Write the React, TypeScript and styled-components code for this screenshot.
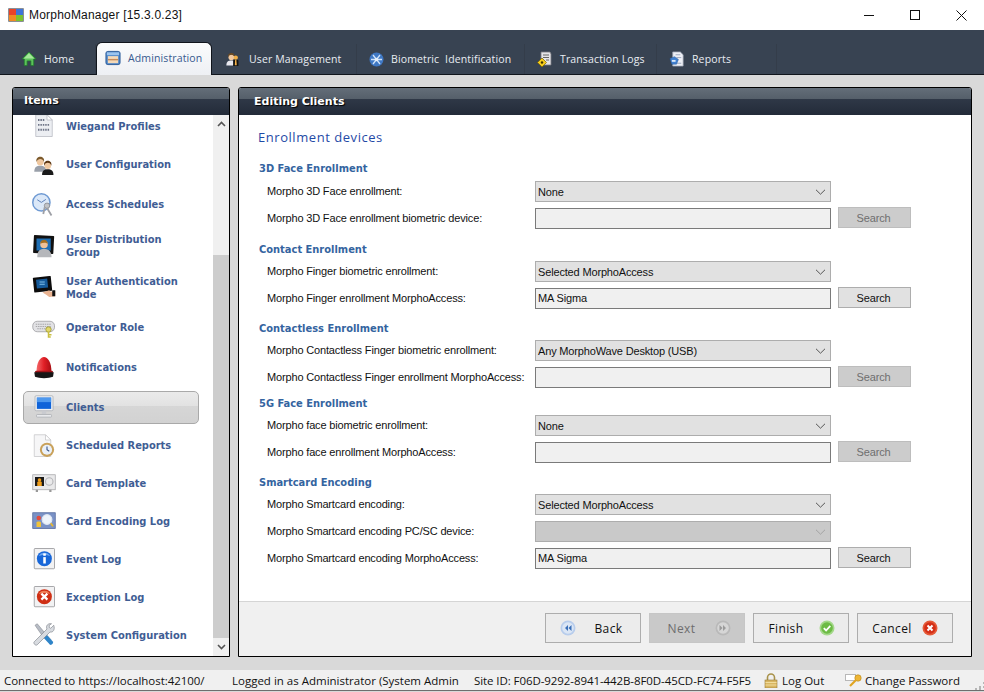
import React from "react";
import styled, { createGlobalStyle } from "styled-components";

const Global = createGlobalStyle`
  html, body { margin: 0; padding: 0; background: #d9d9d9; }
  * { box-sizing: border-box; }
`;
const UI = `"Open Sans", "Noto Sans", Tahoma, sans-serif`;
const FIELD = `"Liberation Sans", Arial, sans-serif`;
const BOLD = `"DejaVu Sans", Verdana, sans-serif`;

const Page = styled.div`
  width: 984px; height: 692px; overflow: hidden; display: flex; flex-direction: column;
  background: #d9d9d9; font-family: ${UI}; color: #111;
`;
const TitleBar = styled.div`
  height: 30px; background: #fff; display: flex; align-items: center; padding-left: 8px;
`;
const TitleText = styled.span`
  margin-left: 5px; font: 12px ${FIELD}; letter-spacing: 0.2px; color: #111; flex: 1;
`;
const WinBtn = styled.div`
  width: 46px; height: 30px; display: flex; align-items: center; justify-content: center;
`;
const Nav = styled.div`
  height: 45px; background: #384352; border-bottom: 1px solid #10151c; display: flex; align-items: flex-end; padding-left: 9px;
`;
const Tab = styled.div<{ $w: number; $active?: boolean; $ws?: number }>`
  width: ${p => p.$w}px; height: ${p => (p.$active ? 33 : 30)}px; display: flex; align-items: center; gap: 7px;
  padding-left: ${p => (p.$active ? 8 : 12)}px;
  margin-right: ${p => (p.$active ? 2 : 0)}px;
  padding-bottom: ${p => (p.$active ? 3 : 0)}px;
  margin-bottom: ${p => (p.$active ? -1 : 0)}px;
  font-size: 10.5px; letter-spacing: 0.13px; word-spacing: ${p => p.$ws ?? 0}px;
  color: ${p => (p.$active ? "#37598f" : "#e9edf2")};
  background: ${p => (p.$active ? "linear-gradient(#fafbfc, #eef0f4)" : "transparent")};
  border: ${p => (p.$active ? "1px solid #10151c" : "none")};
  border-bottom: none; border-radius: ${p => (p.$active ? "6px 6px 0 0" : "0")};
  border-right: ${p => (p.$active ? "1px solid #10151c" : "1px solid #343d4a")};
  white-space: nowrap;
`;
const Main = styled.div`
  flex: 1; display: flex; gap: 8px; padding: 12px 12px 13px;
  min-height: 0;
`;
const Panel = styled.div<{ $w?: number }>`
  width: ${p => (p.$w ? p.$w + "px" : "auto")}; flex: ${p => (p.$w ? "none" : 1)};
  border: 1px solid #000; border-radius: 3px 3px 0 0; background: #fff; display: flex; flex-direction: column; overflow: hidden;
`;
const PanelHead = styled.div<{ $pad: number; $pb: number }>`
  height: 27px; flex: none; padding-left: ${p => p.$pad}px; display: flex; align-items: center;
  background: linear-gradient(#646e79 0, #555f6a 40%, #2f3847 41%, #232b39 100%);
  color: #fff; font: bold 11px ${BOLD}; text-shadow: 1px 1px 1px #000; padding-bottom: ${p => p.$pb}px;
`;
const SideBody = styled.div`
  flex: 1; display: flex; min-height: 0;
`;
const List = styled.div`
  flex: 1; overflow: hidden; background: #fff;
`;
const ListInner = styled.div`
  margin-top: -8px;
`;
const Item = styled.div<{ $h: number }>`
  height: ${p => p.$h}px; display: flex; align-items: center; padding: 0 14px 0 10px;
`;
const ItemBox = styled.div<{ $active?: boolean }>`
  flex: 1; height: 33px; display: flex; align-items: center; gap: 10px; padding-left: 8px;
  border: 1px solid ${p => (p.$active ? "#a9a9a9" : "transparent")}; border-radius: 5px;
  background: ${p => (p.$active ? "linear-gradient(#eaeaea 0, #e2e2e2 45%, #d6d6d6 46%, #d2d2d2 100%)" : "transparent")};
`;
const ItemIcon = styled.div`
  width: 24px; height: 24px; flex: none; display: flex;
`;
const ItemText = styled.span`
  font: bold 11px/13px ${BOLD}; font-stretch: condensed; color: #3f5d94; max-width: 126px;
`;
const Scroll = styled.div`
  width: 16px; flex: none; background: #f0f0f0; display: flex; flex-direction: column;
`;
const ScrollArrow = styled.div`
  height: 18px; flex: none; display: flex; align-items: center; justify-content: center;
`;
const ScrollGap = styled.div`
  flex: 1;
`;
const Thumb = styled.div`
  height: 383px; flex: none; background: #cdcdcd;
`;
const Form = styled.div`
  flex: 1; padding-left: 19px; min-height: 0; background: #fff;
`;
const PageTitle = styled.div`
  margin-top: 13px; height: 18px; line-height: 18px; font-size: 13px; letter-spacing: 0.55px; color: #1f4aa6;
`;
const Section = styled.div<{ $top: number }>`
  margin-top: ${p => p.$top}px; display: flex; flex-direction: column; gap: 6px;
`;
const Heading = styled.div<{ $lh: number }>`
  height: 14px; margin-left: 1px; font: bold 11px/${p => p.$lh}px ${BOLD}; font-stretch: condensed; color: #34649f;
`;
const Row = styled.div`
  display: grid; grid-template-columns: 261px 296px 73px; column-gap: 7px; margin-left: 9px; height: 21px; align-items: center;
  font: 11px ${FIELD}; letter-spacing: -0.16px; color: #111;
`;
const Label = styled.span`
  white-space: nowrap; margin-top: -2px;
`;
const Select = styled.div<{ $disabled?: boolean }>`
  height: 21px; border: 1px solid #adadad; background: ${p => (p.$disabled ? "#c9c9c9" : "#e1e1e1")};
  display: flex; align-items: center; justify-content: space-between; padding: 0 4px 0 2px;
`;
const Input = styled.div`
  height: 21px; border: 1px solid #7a7a7a; background: #f0f0f0; display: flex; align-items: center; padding: 0 0 2px 2px;
`;
const SearchBtn = styled.div<{ $disabled?: boolean }>`
  height: 21px; margin-top: -2px; border: 1px solid ${p => (p.$disabled ? "#bdbdbd" : "#adadad")};
  background: ${p => (p.$disabled ? "#cccccc" : "#e1e1e1")}; color: ${p => (p.$disabled ? "#6f6f6f" : "#111")};
  display: flex; align-items: center; justify-content: center; padding-right: 2px;
`;
const Footer = styled.div`
  height: 55px; flex: none; background: #f0f0f0; border-top: 1px solid #d5d5d5; display: flex; justify-content: flex-end; gap: 8px;
  padding: 11px 18px 0 0;
`;
const WizBtn = styled.div<{ $disabled?: boolean; $gap?: number }>`
  width: 96px; height: 30px; border: 1px solid ${p => (p.$disabled ? "#c6c6c6" : "#adadad")};
  background: ${p => (p.$disabled ? "#c9c9c9" : "#ececec")}; color: ${p => (p.$disabled ? "#6d6d6d" : "#111")};
  display: flex; align-items: center; justify-content: center; gap: ${p => p.$gap ?? 15}px; font-size: 12px; letter-spacing: 0.4px;
`;
const WizLabel = styled.span<{ $w: number; $right?: boolean }>`
  width: ${p => p.$w}px; text-align: ${p => (p.$right ? "right" : "center")};
`;
const Status = styled.div`
  height: 21px; flex: none; background: #f0f0f0; border-bottom: 1px solid #6e6e6e; display: flex; align-items: center; font-size: 11.5px; color: #111; white-space: nowrap;
  margin-bottom: 1px;
`;
const StatusCell = styled.div<{ $w: number; $pl?: number; $ls?: number }>`
  width: ${p => p.$w}px; flex: none; overflow: hidden; padding-left: ${p => p.$pl ?? 0}px; display: flex; align-items: center; gap: 4px;
  letter-spacing: ${p => p.$ls ?? 0}px;
`;
const Grip = styled.div`
  flex: 1; display: flex; justify-content: flex-end; align-items: flex-end; height: 100%; padding-right: 1px;
`;

const S = ({ children, s = 24, vb = 32 }: { children: React.ReactNode; s?: number; vb?: number }) => (
  <svg width={s} height={s} viewBox={`0 0 ${vb} ${vb}`} style={{ display: "block", flex: "none" }}>{children}</svg>
);

const Person = ({ x, y, k = 1, body = "#555", hair = "#8a5a2a" }: { x: number; y: number; k?: number; body?: string; hair?: string }) => (
  <g transform={`translate(${x} ${y}) scale(${k})`}>
    <path d="M-8 16c0-6 3-8 8-8s8 2 8 8z" fill={body} />
    <circle cx="0" cy="3" r="4.6" fill="#f0c8a0" />
    <path d="M-5 3c-1-5 2-7 5-7s6 2 5 7c-1-3-3-4-5-4s-4 1-5 4z" fill={hair} />
  </g>
);

const icons = {
  home: (
    <S s={16} vb={17}>
      <path d="M8.5 1 L16 8.5 H13.5 V15.5 H10.5 V10.5 H6.5 V15.5 H3.5 V8.5 H1 Z" fill="#5cc25a" stroke="#1f7a2c" strokeWidth="0.8" />
      <path d="M8.5 2.5 L14 8 H3z" fill="#a5e79a" />
    </S>
  ),
  admin: (
    <S s={16} vb={17}>
      <rect x="1" y="1.5" width="15" height="14" rx="2" fill="#4d86c9" stroke="#2b5a98" />
      <rect x="2" y="2.5" width="13" height="3" fill="#9cc4ee" />
      <rect x="3" y="6.5" width="11" height="7.5" fill="#f4d9b8" />
      <rect x="3" y="9.5" width="11" height="1.5" fill="#c78b5a" />
    </S>
  ),
  users: (
    <S s={16} vb={18}>
      <Person x={6} y={5} k={0.7} body="#e8e8ef" hair="#6b4a22" />
      <path d="M8 17v-6c0-2 6-2 6 0v6z" fill="#111" />
      <circle cx="11" cy="7.5" r="2.4" fill="#f2b048" />
      <path d="M10.3 10h1.4l.4 6h-2.2z" fill="#f2b048" />
    </S>
  ),
  bio: (
    <S s={15} vb={15}>
      <circle cx="7.5" cy="7.5" r="7" fill="#3f78c4" />
      <path d="M4 3l7 9M11 3l-7 9M2 7.5h11" stroke="#cfe3fa" strokeWidth="1.3" fill="none" />
      <circle cx="7.5" cy="7.5" r="1.8" fill="#e6f0fb" />
    </S>
  ),
  tx: (
    <S s={16} vb={16}>
      <path d="M4 1h9l1 2v11H4z" fill="#e5e5e8" stroke="#7a7a80" strokeWidth="0.8" />
      <path d="M6 4h6M6 6.5h6M9 9h3" stroke="#666" strokeWidth="1" />
      <path d="M5 7 L9.5 11.5 L5 16 L0.5 11.5 Z" fill="#f5cc1c" stroke="#7a6400" strokeWidth="0.7" />
      <circle cx="5" cy="11.5" r="1.2" fill="#3b3000" />
    </S>
  ),
  reports: (
    <S s={16} vb={17}>
      <path d="M4 1h8l3 3v12H4z" fill="#eef0f6" stroke="#a2a8b8" strokeWidth="0.8" />
      <path d="M7 4h5M8 7h5M8 13h5" stroke="#9aa4bc" strokeWidth="1" />
      <path d="M1 8l5-2 4 3-2 5-5 0z" fill="#3f7fcf" stroke="#285a9c" strokeWidth="0.5" />
      <path d="M3 9.5h4v2H3z" fill="#d8e8fa" />
    </S>
  ),
  wiegand: (
    <S>
      <path d="M5 1h15l7 7v22H5z" fill="#eceef2" stroke="#b5b8c0" />
      <path d="M20 1v7h7z" fill="#fff" stroke="#b5b8c0" />
      <path d="M8 8h9M8 14.5h15M8 21h15" stroke="#6e7486" strokeWidth="2.4" strokeDasharray="2 1.2" />
    </S>
  ),
  userCfg: (
    <S>
      <Person x={11} y={9} k={1} body="#9aa0aa" hair="#7c5a2c" />
      <Person x={21} y={14} k={0.95} body="#1a1a1a" hair="#5a3410" />
    </S>
  ),
  access: (
    <S>
      <circle cx="12.5" cy="12.5" r="11.5" fill="#dbe8f8" stroke="#6f9ad3" strokeWidth="2" />
      <path d="M12.5 12.5L7 9M12.5 12.5l6-4" stroke="#5b7fb8" strokeWidth="1.3" />
      <circle cx="20" cy="17" r="3.6" fill="#c2c4c8" stroke="#85878c" />
      <path d="M20 20l6 10M17 19l-2 9" stroke="#9ea0a6" strokeWidth="2.4" />
    </S>
  ),
  dist: (
    <S>
      <rect x="2" y="2" width="27" height="24" rx="1" fill="#111" transform="rotate(3 15 14)" />
      <rect x="6" y="6" width="19" height="16" fill="#1f6fb4" />
      <circle cx="16" cy="14" r="5" fill="#eec298" />
      <path d="M11 13c0-7 10-7 10 0-2-2-7-2-10 0z" fill="#a57022" />
      <path d="M7 31c0-9 4-11 9-11s10 2 10 11z" fill="#b5b7bb" />
    </S>
  ),
  auth: (
    <S>
      <rect x="2" y="1" width="24" height="20" rx="1" fill="#0c0c0c" transform="rotate(-6 14 11)" />
      <rect x="6" y="4" width="15" height="12" fill="#155a9a" transform="rotate(-6 14 11)" />
      <path d="M10 8h7M10 11h7" stroke="#8ccbf0" strokeWidth="1.2" />
      <path d="M14 22l9-3 2 2 6-1v7l-8 1-4-3z" fill="#e9b391" />
      <rect x="27" y="19" width="4" height="8" fill="#111" />
    </S>
  ),
  operator: (
    <S>
      <rect x="1" y="7" width="29" height="14" rx="6" fill="#e2e2e5" stroke="#9a9a9d" />
      <path d="M5 11h21M5 14h21M7 17h15" stroke="#a8a8ab" strokeWidth="1.6" strokeDasharray="2 1" />
      <circle cx="22" cy="18" r="3.6" fill="#e3d96a" stroke="#96902a" />
      <path d="M22 21v8M22 25h4M22 28h3" stroke="#c9bf40" strokeWidth="2" />
    </S>
  ),
  notif: (
    <S>
      <defs>
        <linearGradient id="sirenDome" x1="0" x2="1" y1="0" y2="0">
          <stop offset="0" stopColor="#f4696a" />
          <stop offset="0.5" stopColor="#e11f26" />
          <stop offset="1" stopColor="#a80d13" />
        </linearGradient>
      </defs>
      <path d="M6 23C6-4 26-4 26 23z" fill="url(#sirenDome)" />
      <rect x="4" y="21" width="24" height="3" rx="1.5" fill="#9c1116" />
      <path d="M3 23h26l-1 6c-6 2.500-18 2.500-24 0z" fill="#161616" />
    </S>
  ),
  clients: (
    <S>
      <rect x="4" y="1" width="24" height="20" rx="1.5" fill="#eef0f3" stroke="#a8abb0" />
      <rect x="6.500" y="3.500" width="19" height="15" fill="#0f63d9" />
      <rect x="6.500" y="3.500" width="19" height="6" fill="#4d98ee" />
      <rect x="13" y="21" width="6" height="5" fill="#c9cbd0" />
      <rect x="6" y="26" width="20" height="3.500" rx="1" fill="#e8e9ec" stroke="#a8abb0" />
    </S>
  ),
  sched: (
    <S>
      <path d="M3 1h15l7 7v22H3z" fill="#f6f6f7" stroke="#c5c5c8" />
      <path d="M18 1v7h7z" fill="#fff" stroke="#c5c5c8" />
      <circle cx="20" cy="21" r="9.5" fill="#c9a15a" />
      <circle cx="20" cy="21" r="6.8" fill="#eaf1fa" />
      <path d="M20 16.5V21l3 2" stroke="#334e80" strokeWidth="1.4" fill="none" />
    </S>
  ),
  card: (
    <S>
      <rect x="1" y="5" width="30" height="20" fill="#e9e9ea" stroke="#a5a5a8" />
      <rect x="4" y="8" width="12" height="12" fill="#1a1a1a" />
      <path d="M7 20v-5c0-2 6-2 6 0v5z" fill="#ee9c1a" />
      <circle cx="10" cy="12" r="2.4" fill="#ee9c1a" />
      <circle cx="23" cy="14" r="5" fill="none" stroke="#b5b5b8" strokeWidth="1.5" />
      <rect x="5" y="25" width="3" height="3" fill="#999" /><rect x="23" y="25" width="3" height="3" fill="#999" />
    </S>
  ),
  encode: (
    <S>
      <rect x="1" y="5" width="30" height="21" fill="#7a92c6" stroke="#50659a" />
      <circle cx="9" cy="12" r="3" fill="#e54b3c" />
      <path d="M6 24v-6c0-2 6-2 6 0v6z" fill="#f0c33a" />
      <circle cx="20" cy="14" r="6.5" fill="#eef4fb" stroke="#dfe6f2" strokeWidth="1.5" />
      <path d="M25 19l3 4" stroke="#e8b830" strokeWidth="2.4" />
    </S>
  ),
  event: (
    <S>
      <rect x="3" y="2" width="27" height="27" rx="1" fill="#f2f2f3" stroke="#8e8e90" />
      <circle cx="16.5" cy="15.5" r="10" fill="#1766d8" />
      <path d="M9 12c2-6 13-6 15 0-4-2-11-2-15 0z" fill="#6ba6f0" />
      <rect x="15" y="13.5" width="3.4" height="8.5" fill="#fff" />
      <rect x="15" y="8.5" width="3.4" height="3.2" fill="#fff" />
    </S>
  ),
  exception: (
    <S>
      <rect x="3" y="2" width="27" height="27" rx="1" fill="#f2f2f3" stroke="#8e8e90" />
      <circle cx="16.5" cy="15.5" r="10" fill="#cf2f14" />
      <path d="M9 12c2-6 13-6 15 0-4-2-11-2-15 0z" fill="#ee8058" />
      <path d="M12.5 11.5l8 8M20.5 11.5l-8 8" stroke="#fff" strokeWidth="3" />
    </S>
  ),
  system: (
    <S>
      <path d="M4 3l3-2 10 12 8 9-3 3-9-9z" fill="#b7bcc5" stroke="#7c8088" strokeWidth="0.7" />
      <path d="M18 14l10 11c1 2-2 5-4 4L14 18z" fill="#2f84c8" />
      <path d="M29 3l-4 4-2-1 0-3 3-2c-5-1-8 3-6 7L3 25c-2 2 2 6 4 4L24 12c4 1 7-3 5-9z" fill="#d8dbe0" stroke="#777c85" strokeWidth="0.8" />
    </S>
  ),
};

const RoundIcon = ({ c, light, children, s = 16 }: { c: string; light: string; children: React.ReactNode; s?: number }) => (
  <S s={s} vb={16}>
    <circle cx="8" cy="8" r="7.5" fill={light} />
    <circle cx="8" cy="8" r="5.8" fill={c} />
    {children}
  </S>
);

const Chevron = ({ c = "#555", w = 11 }: { c?: string; w?: number }) => (
  <svg width={w} height="6" viewBox="0 0 11 6"><path d="M1 .8l4.5 4.4L10 .8" fill="none" stroke={c} strokeWidth="1" /></svg>
);

const items: { t: string; i: keyof typeof icons; h: number; a?: boolean }[] = [
  { t: "Wiegand Profiles", i: "wiegand", h: 38 },
  { t: "User Configuration", i: "userCfg", h: 39 },
  { t: "Access Schedules", i: "access", h: 41 },
  { t: "User Distribution Group", i: "dist", h: 42 },
  { t: "User Authentication Mode", i: "auth", h: 41 },
  { t: "Operator Role", i: "operator", h: 39 },
  { t: "Notifications", i: "notif", h: 40 },
  { t: "Clients", i: "clients", h: 40, a: true },
  { t: "Scheduled Reports", i: "sched", h: 37 },
  { t: "Card Template", i: "card", h: 38 },
  { t: "Card Encoding Log", i: "encode", h: 38 },
  { t: "Event Log", i: "event", h: 38 },
  { t: "Exception Log", i: "exception", h: 38 },
  { t: "System Configuration", i: "system", h: 38 },
];

type R = { l: string; sel?: string; inp?: string; dis?: boolean; search?: "on" | "off" };
const sections: { h: string; top: number; lh: number; rows: R[] }[] = [
  { h: "3D Face Enrollment", top: 15, lh: 16, rows: [
    { l: "Morpho 3D Face enrollment:", sel: "None" },
    { l: "Morpho 3D Face enrollment biometric device:", inp: "", search: "off" } ] },
  { h: "Contact Enrollment", top: 12, lh: 18, rows: [
    { l: "Morpho Finger biometric enrollment:", sel: "Selected MorphoAccess" },
    { l: "Morpho Finger enrollment MorphoAccess:", inp: "MA Sigma", search: "on" } ] },
  { h: "Contactless Enrollment", top: 11, lh: 18, rows: [
    { l: "Morpho Contactless Finger biometric enrollment:", sel: "Any MorphoWave Desktop (USB)" },
    { l: "Morpho Contactless Finger enrollment MorphoAccess:", inp: "", search: "off" } ] },
  { h: "5G Face Enrollment", top: 7, lh: 18, rows: [
    { l: "Morpho face biometric enrollment:", sel: "None" },
    { l: "Morpho face enrollment MorphoAccess:", inp: "", search: "off" } ] },
  { h: "Smartcard Encoding", top: 11, lh: 18, rows: [
    { l: "Morpho Smartcard encoding:", sel: "Selected MorphoAccess" },
    { l: "Morpho Smartcard encoding PC/SC device:", sel: "", dis: true },
    { l: "Morpho Smartcard encoding MorphoAccess:", inp: "MA Sigma", search: "on" } ] },
];

export default function App() {
  return (
    <Page>
      <Global />
      <TitleBar>
        <svg width="16" height="14" viewBox="0 0 16 14" style={{ display: "block" }}>
          <rect width="16" height="14" rx="1" fill="#8a8f96" />
          <rect x="1" y="1" width="7" height="6" fill="#e8432a" />
          <rect x="8" y="1" width="7" height="6" fill="#3f74d8" />
          <rect x="1" y="7" width="7" height="6" fill="#f08a24" />
          <rect x="8" y="7" width="7" height="6" fill="#7cc22e" />
        </svg>
        <TitleText>MorphoManager [15.3.0.23]</TitleText>
        <WinBtn><svg width="10" height="10"><path d="M0 5.5h10" stroke="#111" /></svg></WinBtn>
        <WinBtn><svg width="10" height="10"><rect x=".5" y=".5" width="9" height="9" fill="none" stroke="#111" /></svg></WinBtn>
        <WinBtn><svg width="11" height="11"><path d="M.5.5l10 10M10.5.5l-10 10" stroke="#111" /></svg></WinBtn>
      </TitleBar>
      <Nav>
        <Tab $w={87}>{icons.home}Home</Tab>
        <Tab $w={116} $active>{icons.admin}Administration</Tab>
        <Tab $w={143}>{icons.users}User Management</Tab>
        <Tab $w={168} $ws={3}>{icons.bio}Biometric Identification</Tab>
        <Tab $w={132}>{icons.tx}Transaction Logs</Tab>
        <Tab $w={120}>{icons.reports}Reports</Tab>
      </Nav>
      <Main>
        <Panel $w={218}>
          <PanelHead $pad={11} $pb={2}>Items</PanelHead>
          <SideBody>
            <List>
              <ListInner>
                {items.map(it => (
                  <Item key={it.t} $h={it.h}>
                    <ItemBox $active={it.a}>
                      <ItemIcon>{icons[it.i]}</ItemIcon>
                      <ItemText>{it.t}</ItemText>
                    </ItemBox>
                  </Item>
                ))}
              </ListInner>
            </List>
            <Scroll>
              <ScrollArrow>
                <svg width="9" height="6" viewBox="0 0 9 6"><path d="M1 5l3.5-3.5L8 5" fill="none" stroke="#555" strokeWidth="1.6" /></svg>
              </ScrollArrow>
              <ScrollGap />
              <Thumb />
              <ScrollArrow>
                <svg width="9" height="6" viewBox="0 0 9 6"><path d="M1 1l3.5 3.5L8 1" fill="none" stroke="#555" strokeWidth="1.6" /></svg>
              </ScrollArrow>
            </Scroll>
          </SideBody>
        </Panel>
        <Panel>
          <PanelHead $pad={15} $pb={1}>Editing Clients</PanelHead>
          <Form>
            <PageTitle>Enrollment devices</PageTitle>
            {sections.map(sec => (
              <Section key={sec.h} $top={sec.top}>
                <Heading $lh={sec.lh}>{sec.h}</Heading>
                {sec.rows.map(r => (
                  <Row key={r.l}>
                    <Label>{r.l}</Label>
                    {r.sel !== undefined ? (
                      <Select $disabled={r.dis}>
                        <span>{r.sel}</span>
                        <Chevron c={r.dis ? "#a3a3a3" : "#555"} />
                      </Select>
                    ) : (
                      <Input>{r.inp}</Input>
                    )}
                    {r.search && <SearchBtn $disabled={r.search === "off"}>Search</SearchBtn>}
                  </Row>
                ))}
              </Section>
            ))}
          </Form>
          <Footer>
            <WizBtn>
              <RoundIcon c="#dbe6f5" light="#b8cdec"><path d="M8 5L5 8l3 3zM11.5 5l-3 3 3 3z" fill="#3a6fb8" /></RoundIcon>
              <WizLabel $w={36}>Back</WizLabel>
            </WizBtn>
            <WizBtn $disabled>
              <WizLabel $w={36}>Next</WizLabel>
              <RoundIcon c="#d6d6d6" light="#b9b9b9"><path d="M4.5 5l3 3-3 3zM8 5l3 3-3 3z" fill="#9a9a9a" /></RoundIcon>
            </WizBtn>
            <WizBtn>
              <WizLabel $w={36} $right>Finish</WizLabel>
              <RoundIcon c="#6dbb45" light="#a4d88a"><path d="M4.8 8.2l2.3 2.3 4.2-4.6" fill="none" stroke="#fff" strokeWidth="1.8" /></RoundIcon>
            </WizBtn>
            <WizBtn $gap={10}>
              <WizLabel $w={40}>Cancel</WizLabel>
              <RoundIcon c="#d42f17" light="#e55a38"><path d="M5.5 5.5l5 5M10.5 5.5l-5 5" stroke="#fff" strokeWidth="2" /></RoundIcon>
            </WizBtn>
          </Footer>
        </Panel>
      </Main>
      <Status>
        <StatusCell $w={232} $pl={4} $ls={-0.05}>Connected to https://localhost:42100/</StatusCell>
        <StatusCell $w={227}>Logged in as Administrator (System Admin</StatusCell>
        <StatusCell $w={305} $pl={15} $ls={-0.08}>Site ID: F06D-9292-8941-442B-8F0D-45CD-FC74-F5F5</StatusCell>
        <StatusCell $w={81}>
          <svg width="14" height="15" viewBox="0 0 14 15"><path d="M3.5 7V4.5a3.5 3.5 0 017 0V7" fill="none" stroke="#a8924a" strokeWidth="1.6" /><rect x="1" y="7" width="12" height="8" fill="#d9b662" stroke="#9a7e38" strokeWidth=".6" /><path d="M1.5 9.5h11M1.5 12h11" stroke="#f0dc9c" /></svg>
          Log Out
        </StatusCell>
        <StatusCell $w={130} $ls={-0.02}>
          <svg width="18" height="14" viewBox="0 0 18 14" style={{ marginRight: -2 }}><rect x=".5" y="1.5" width="10" height="6" fill="#fff" stroke="#b8b8b8" /><circle cx="13" cy="5" r="3.2" fill="#eeb635" stroke="#b58418" strokeWidth=".6" /><path d="M11 7l-6 6" stroke="#e0a420" strokeWidth="2.2" /></svg>
          Change Password
        </StatusCell>
        <Grip>
          <svg width="10" height="10"><path d="M8 2h2v2H8zM4 6h2v2H4zM8 6h2v2H8zM0 10h2v-2H0zM4 10h2V8H4z" fill="#b5b5b5" /></svg>
        </Grip>
      </Status>
    </Page>
  );
}
